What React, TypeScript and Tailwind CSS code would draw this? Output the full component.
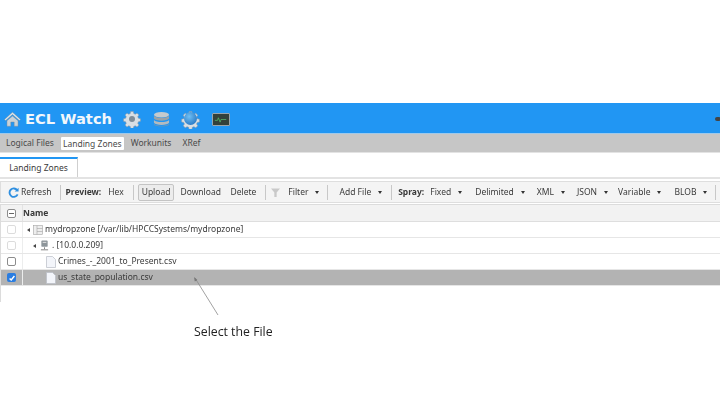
import React from "react";

const Caret = () => <span className="ml-[7px] mt-[1px] h-0 w-0 border-x-[2.5px] border-t-[3px] border-x-transparent border-t-[#333]" />;

const Gear = ({ className }: { className?: string }) => (
	<svg viewBox="0 0 24 24" className={className}>
		<path
			d="M10 1h4l.6 3 2.2 1 2.6-1.700 2.800 2.800-1.700 2.600 1 2.200 3 .6v4l-3 .6-1 2.200 1.700 2.600-2.800 2.800-2.600-1.700-2.200 1-.6 3h-4l-.6-3-2.200-1-2.600 1.700-2.800-2.800 1.700-2.600-1-2.200-3-.6v-4l3-.6 1-2.200-1.700-2.600 2.800-2.800 2.600 1.700 2.200-1z"
			fill="#d9dfe4"
			stroke="#8b99a5"
			strokeWidth="0.8"
			transform="translate(1.200 1.200) scale(0.9)"
		/>
		<circle cx="12" cy="12" r="4" fill="#7f8d98" />
	</svg>
);

const FileIcon = () => (
	<svg viewBox="0 0 10 12" className="h-[12px] w-[10px]">
		<path d="M.5.5h6l3 3v8h-9z" fill="#f3f5fa" stroke="#b9bdc6" strokeWidth="0.7" />
	</svg>
);

const ToolBtn = ({ label, menu, className }: { label: string; menu?: boolean; className?: string }) => (
	<div className={`flex items-center ${className ?? ""}`}>
		<span>{label}</span>
		{menu && <Caret />}
	</div>
);

const Check = ({ faded, checked }: { faded?: boolean; checked?: boolean }) => (
	<div className="flex w-[22px] shrink-0 items-center justify-center self-stretch border-r border-[#eceded]">
		{checked ? (
			<div className="flex h-[9px] w-[9px] items-center justify-center rounded-[2px] bg-[#2a7de1]">
				<svg viewBox="0 0 10 10" className="h-[8px] w-[8px]">
					<path d="M2 5.500l2 2 4-5" fill="none" stroke="white" strokeWidth="1.800" />
				</svg>
			</div>
		) : (
			<div className={`h-[9px] w-[9px] rounded-[2px] border bg-white ${faded ? "border-[#dcdcdc]" : "border-[#8c8c8c]"}`} />
		)}
	</div>
);

const Row = ({ children, faded, checked, selected }: { children: React.ReactNode; faded?: boolean; checked?: boolean; selected?: boolean }) => (
	<div className={`flex h-[16px] items-center border-b border-[#e6e6e6] ${selected ? "bg-[#b3b3b3]" : "bg-white"}`}>
		<Check faded={faded} checked={checked} />
		{children}
	</div>
);

export default function App() {
	return (
		<div className="relative h-[405px] w-[720px] overflow-hidden bg-white text-[8.500px] text-[#3a3a3a] [font-family:'Noto_Sans',sans-serif]">
			<div className="pt-[103px] blur-[0.5px]">
				{/* top bar */}
				<div className="flex h-[30px] items-center bg-[#2196f3] pl-[4px] pt-[2px]">
					<svg viewBox="0 0 20 18" className="h-[16px] w-[17px]">
						<path d="M10 1L.500 9.500l1.500 1.300L10 3.800l8 7 1.500-1.300z" fill="#dfe6ea" stroke="#7e8b93" strokeWidth="0.5" />
						<path d="M3.500 11L10 5.500l6.500 5.500v6.500h-4.500v-5h-4v5h-4.500z" fill="#c9d2d8" stroke="#7e8b93" strokeWidth="0.5" />
					</svg>
					<span className="ml-[4px] mt-[1px] text-[14.700px] font-bold text-[#f2f7fb] [font-family:'DejaVu_Sans',sans-serif]">ECL Watch</span>
					<Gear className="ml-[11px] h-[18px] w-[18px]" />
					<svg viewBox="0 0 18 18" className="ml-[12px] h-[17px] w-[17px]">
						<ellipse cx="9" cy="4" rx="8" ry="3" fill="#c5cacd" />
						<path d="M1 5c2 3 14 3 16 0v3c-2 3-14 3-16 0z" fill="#9aa2a7" />
						<path d="M1 9.500c2 3 14 3 16 0v3c-2 3-14 3-16 0z" fill="#b3babf" />
						<path d="M1 13.500c2 3 14 3 16 0v.5c-1 3-15 3-16 0z" fill="#8d959a" />
					</svg>
					<div className="relative ml-[11px] h-[19px] w-[19px]">
						<Gear className="absolute inset-0 h-[19px] w-[19px]" />
						<div className="absolute left-[3px] top-[2px] h-[13px] w-[13px] rounded-full bg-[radial-gradient(circle_at_40%_35%,#6fc0f5,#1565b8)]" />
					</div>
					<div className="ml-[12px] flex h-[13px] w-[18px] items-center justify-center rounded-[1px] border border-[#9aa5ab] bg-[#33413b]">
						<svg viewBox="0 0 16 10" className="h-[9px] w-[14px]">
							<path d="M1 6h3l1-3 2 5 1-3h6" fill="none" stroke="#57c26b" strokeWidth="0.8" />
						</svg>
					</div>
					<div className="ml-auto h-[4px] w-[6px] translate-x-[1px] rounded-full bg-[#444]" />
				</div>

				{/* main tabs */}
				<div className="flex h-[19px] items-center border-t border-[#9fc9ea] bg-[#c6c6c6] pl-[3px] text-[#4a4a4a]">
					<span className="px-[3px]">Logical Files</span>
					<span className="ml-[4px] rounded-[1px] bg-white px-[2px] py-[1px] leading-[11px]">Landing Zones</span>
					<span className="ml-[7px]">Workunits</span>
					<span className="ml-[11px]">XRef</span>
				</div>

				{/* sub tab */}
				<div className="flex h-[25px] items-end border-t border-[#e3e3e3] bg-white">
					<div className="flex h-[20px] w-[78px] items-center justify-center border-r border-t-2 border-[#cfcfcf] border-t-[#2196f3] bg-white">Landing Zones</div>
				</div>

				{/* toolbar */}
				<div className="border-t-2 border-[#e3e3e3] pt-[2px]">
					<div className="flex h-[22px] items-center border-y border-l border-[#dedede] bg-[#f4f4f4] pl-[7px] whitespace-nowrap">
						<svg viewBox="0 0 12 12" className="h-[11px] w-[11px]">
							<path d="M10 3.500A4.600 4.600 0 1 0 10.500 8" fill="none" stroke="#2f8fe0" strokeWidth="2" />
							<path d="M11.500 .8v4.200H7.300z" fill="#2f8fe0" />
						</svg>
						<span className="ml-[2px]">Refresh</span>
						<div className="ml-[9px] h-[15px] w-px bg-[#c8c8c8]" />
						<span className="ml-[4px] font-bold">Preview:</span>
						<span className="ml-[7px]">Hex</span>
						<div className="ml-[9px] h-[15px] w-px bg-[#c8c8c8]" />
						<span className="ml-[4px] flex h-[17px] items-center rounded-[2px] border border-[#c4c4c4] bg-[#ececec] px-[3px]">Upload</span>
						<span className="ml-[6px] w-[40px]">Download</span>
						<span className="ml-[10px]">Delete</span>
						<div className="ml-[9px] h-[15px] w-px bg-[#c8c8c8]" />
						<svg viewBox="0 0 10 10" className="ml-[5px] h-[9px] w-[9px]">
							<path d="M0 .5h10L6.300 5v5H3.700V5z" fill="#c9c9c9" />
						</svg>
						<ToolBtn label="Filter" menu className="ml-[8px]" />
						<div className="ml-[8px] h-[15px] w-px bg-[#c8c8c8]" />
						<ToolBtn label="Add File" menu className="ml-[11px]" />
						<div className="ml-[9px] h-[15px] w-px bg-[#c8c8c8]" />
						<span className="ml-[6px] font-bold">Spray:</span>
						<ToolBtn label="Fixed" menu className="ml-[6px]" />
						<ToolBtn label="Delimited" menu className="ml-[13px]" />
						<ToolBtn label="XML" menu className="ml-[12px]" />
						<ToolBtn label="JSON" menu className="ml-[12px]" />
						<ToolBtn label="Variable" menu className="ml-[10px]" />
						<ToolBtn label="BLOB" menu className="ml-[13px]" />
						<div className="ml-[8px] h-[15px] w-px bg-[#c8c8c8]" />
					</div>
				</div>

				{/* grid */}
				<div className="mt-[1px] border-l border-t border-[#dcdcdc]">
					<div className="flex h-[17px] items-center border-b border-[#dedede] bg-[#f2f2f2]">
						<div className="flex w-[22px] items-center justify-center self-stretch border-r border-[#e3e3e3]">
							<div className="flex h-[9px] w-[9px] items-center justify-center rounded-[2px] border border-[#8c8c8c] bg-white">
								<div className="h-px w-[5px] bg-[#666]" />
							</div>
						</div>
						<span className="font-bold">Name</span>
					</div>
					<Row faded>
						<span className="ml-[4px] h-0 w-0 border-y-[2px] border-r-[3px] border-y-transparent border-r-[#444]" />
						<svg viewBox="0 0 10 10" className="ml-[3px] h-[10px] w-[10px]">
							<rect x=".5" y=".5" width="9" height="9" fill="#eeeeee" stroke="#a5a5a5" strokeWidth="0.6" />
							<path d="M4 .5v9M4 3.500h5.500M4 6.500h5.500" stroke="#a5a5a5" strokeWidth="0.6" />
						</svg>
						<span className="ml-[2px]">mydropzone [/var/lib/HPCCSystems/mydropzone]</span>
					</Row>
					<Row faded>
						<span className="ml-[10px] h-0 w-0 border-y-[2px] border-r-[3px] border-y-transparent border-r-[#444]" />
						<svg viewBox="0 0 10 12" className="ml-[4px] h-[11px] w-[9px]">
							<rect x="1.500" y=".5" width="7" height="7" rx="1" fill="#8d959a" />
							<rect x="3" y="2" width="4" height="1" fill="#e5e5e5" />
							<path d="M5 8v2M1 10.800h8" stroke="#777" strokeWidth="1" />
						</svg>
						<span className="ml-[3px]">. [10.0.0.209]</span>
					</Row>
					<Row>
						<div className="ml-[23px]">
							<FileIcon />
						</div>
						<span className="ml-[2px]">Crimes_-_2001_to_Present.csv</span>
					</Row>
					<Row checked selected>
						<div className="ml-[23px]">
							<FileIcon />
						</div>
						<span className="ml-[2px]">us_state_population.csv</span>
					</Row>
					<div className="h-[16px]" />
				</div>
			</div>

			{/* annotation */}
			<svg viewBox="0 0 720 405" className="absolute inset-0 h-[405px] w-[720px]">
				<path d="M218 315L195 278" stroke="#8a8a8a" strokeWidth="0.8" fill="none" />
				<path d="M194 277l.8 4.500 2.600-1.600z" fill="#777" />
			</svg>
			<div className="absolute left-[194px] top-[323px] text-[12.300px] leading-[17px] text-[#222] [font-family:'Open_Sans',sans-serif]">Select the File</div>
		</div>
	);
}
